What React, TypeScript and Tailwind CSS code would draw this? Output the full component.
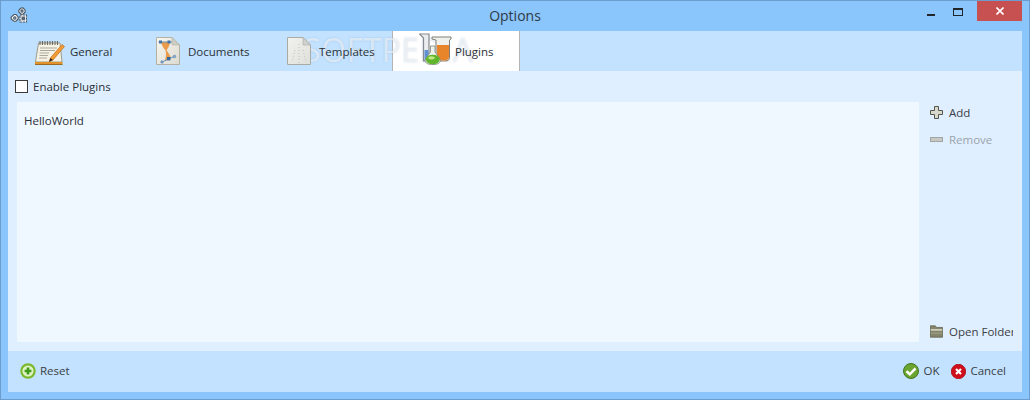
import { ReactNode } from "react";

function Gears() {
  return (
    <svg width="18" height="17" viewBox="0 0 18 17" fill="#f7fbff" stroke="#4c5660" strokeWidth="1.1">
      <path d="M11 1L13 0.8L15 3L15.2 5L13 7.2L11 7L8.8 5L9 3Z" />
      <path d="M4 7.5L6 7.5L8.2 10L8.2 12L6 14.2L4 14.2L1.2 12L1.2 10Z" />
      <path d="M10 8H16.5V15H10Z" strokeDasharray="2.2 0.8" />
      <rect x="11.5" y="9.5" width="3.6" height="3.8" fill="#5a646e" stroke="none" />
      <circle cx="12" cy="4" r="1.1" fill="#8ac5fb" />
      <circle cx="4.8" cy="10.9" r="1.2" fill="#8ac5fb" />
    </svg>
  );
}

function NotepadIcon() {
  return (
    <svg width="30" height="25" viewBox="0 0 30 25">
      <path d="M3.5 3H25L27 22H.5Z" fill="#f6f3e6" stroke="#9d9a88" />
      <path d="M0 22H27.5V24.5H0Z" fill="#e1922a" />
      <path d="M0 24.5H27.5" stroke="#9a6b22" strokeWidth="1" />
      <path d="M5 1V5M7.5 1V5M10 1V5M12.5 1V5M15 1V5M17.5 1V5M20 1V5M22.5 1V5" stroke="#6c6b62" strokeWidth="1.1" />
      <path d="M5 8H22M5 10.5H20M4.5 13H14M4.5 15.5H13M4 18H12" stroke="#aaa89c" strokeWidth="1" />
      <path d="M27 4.5L29.5 6.5L18 20L14.2 21.8L15.4 18Z" fill="#f29a33" stroke="#bd6f1c" strokeWidth="0.7" />
      <path d="M15.4 18L14.2 21.8L18 20Z" fill="#2e2a22" />
    </svg>
  );
}

function DocumentIcon() {
  return (
    <svg width="24" height="28" viewBox="0 0 24 28">
      <defs>
        <linearGradient id="docFill" x1="0" y1="0" x2="1" y2="1">
          <stop offset="0" stopColor="#f9f8f2" />
          <stop offset="1" stopColor="#dcdad0" />
        </linearGradient>
      </defs>
      <path d="M.5 .5H16L23.5 8V27.5H.5Z" fill="url(#docFill)" stroke="#b3b1a6" />
      <path d="M16 .5V8H23.5Z" fill="#cfcdc2" stroke="#b3b1a6" strokeWidth="0.6" />
      <path d="M5 5H14C13.5 9 12 11.5 10.5 13C12 15 14 18 15 21L9 24C10 19 10.5 16 9.5 13.5C7.5 11 5.5 8 5 5Z" fill="#ea9c4d" />
      <path d="M2.5 5H16M6 25L18 19.5" stroke="#5f86b0" strokeWidth="0.9" />
      <rect x="3" y="3.5" width="3" height="3" fill="#4375a8" />
      <rect x="11.5" y="3.5" width="3" height="3" fill="#4375a8" />
      <rect x="11" y="20" width="3.4" height="3.4" fill="#34689d" />
      <circle cx="6" cy="25" r="1.3" fill="#8fb0cf" stroke="#4375a8" strokeWidth="0.5" />
      <circle cx="18.5" cy="19.5" r="1.3" fill="#8fb0cf" stroke="#4375a8" strokeWidth="0.5" />
    </svg>
  );
}

function TemplateIcon() {
  return (
    <svg width="24" height="28" viewBox="0 0 24 28">
      <defs>
        <linearGradient id="tplFill" x1="0" y1="0" x2="1" y2="1">
          <stop offset="0" stopColor="#f2f2ee" />
          <stop offset="1" stopColor="#dededa" />
        </linearGradient>
      </defs>
      <path d="M.5 .5H16L23.5 8V27.5H.5Z" fill="url(#tplFill)" stroke="#aaaaa6" />
      <path d="M16 .5V8H23.5Z" fill="#d0d0cc" stroke="#aaaaa6" strokeWidth="0.6" />
      <path d="M12 7V26M8 13L5 25M16 13L19 25" stroke="#bcbcb8" strokeWidth="0.9" strokeDasharray="1 2" />
    </svg>
  );
}

function FlasksIcon() {
  return (
    <svg width="33" height="32" viewBox="0 0 33 32">
      <path d="M.5 1H10V28H4.5V5Z" fill="#e9edf0" stroke="#85898d" strokeWidth="1.2" />
      <rect x="5.5" y="17" width="4" height="11" fill="#5e8fd0" />
      <path d="M13 4H32V6L30.5 7V24C30.5 27 29 28 26 28H17V7L13 6Z" fill="#f0f0ec" stroke="#807e76" />
      <path d="M18 12H30V24C30 26 28 27.5 26 27.5H18Z" fill="#e8842a" />
      <path d="M11.5 13H16V19L21 26C22.5 29 19.5 31.5 15 31.5H12.5C8 31.5 5 29 6.5 26L11.5 19Z" fill="#eef3ee" stroke="#7b877b" strokeWidth="0.8" />
      <ellipse cx="13.8" cy="26.5" rx="7" ry="4.8" fill="#62b52a" />
      <ellipse cx="12.5" cy="24.8" rx="3.2" ry="1.6" fill="#c3e886" />
    </svg>
  );
}

function TabItem({ label, icon, active, className }: { label: string; icon: ReactNode; active?: boolean; className: string }) {
  return (
    <div className={`flex h-10 shrink-0 items-center ${active ? "border-x border-[#b4b4b4] bg-white" : ""} ${className}`}>
      <div className="relative z-10 mb-[6px] flex shrink-0 self-end">{icon}</div>
      <span className="relative z-10 mt-[1px] text-[11.5px] text-[#2c3136]">{label}</span>
    </div>
  );
}

function PlusIcon() {
  return (
    <svg width="13" height="13" viewBox="0 0 13 13">
      <path d="M4.5 .5H8.5V4.5H12.5V8.5H8.5V12.5H4.5V8.5H.5V4.5H4.5Z" fill="#d8d8cc" stroke="#55554c" />
    </svg>
  );
}

function MinusIcon() {
  return (
    <svg width="13" height="5" viewBox="0 0 13 5">
      <rect x=".5" y=".5" width="12" height="4" fill="#c8c8c4" stroke="#a2a5a6" />
    </svg>
  );
}

function FolderIcon() {
  return (
    <svg width="16" height="15" viewBox="0 0 16 15">
      <path d="M.5 .5H6.5L8 2.5H15.5V14.5H.5Z" fill="#85856c" stroke="#65654f" />
      <path d="M1 4.5H15V6.5H1Z" fill="#d5d5c5" />
      <path d="M1 9H15V10H1Z" fill="#a8a890" />
    </svg>
  );
}

function ResetIcon() {
  return (
    <svg width="16" height="16" viewBox="0 0 16 16">
      <circle cx="8" cy="8" r="7.7" fill="#79b92a" />
      <circle cx="8" cy="8" r="5.6" fill="#dff3c6" />
      <path d="M6.7 4.6H9.3V6.7H11.4V9.3H9.3V11.4H6.7V9.3H4.6V6.7H6.7Z" fill="#3f9a1a" />
    </svg>
  );
}

function OkIcon() {
  return (
    <svg width="16" height="16" viewBox="0 0 16 16">
      <circle cx="8" cy="8" r="7.5" fill="#6aa62f" stroke="#44721d" strokeWidth="1" />
      <path d="M3.5 8.3L6.8 11.3L12.5 5.3" fill="none" stroke="#fff" strokeWidth="2.6" />
    </svg>
  );
}

function CancelIcon() {
  return (
    <svg width="15" height="15" viewBox="0 0 15 15">
      <circle cx="7.5" cy="7.5" r="7.2" fill="#cf0f1a" stroke="#a80d14" strokeWidth="0.8" />
      <path d="M5 5L10 10M10 5L5 10" stroke="#fff" strokeWidth="2.2" />
    </svg>
  );
}

function SideButton({ icon, label, dim }: { icon: ReactNode; label: string; dim?: boolean }) {
  return (
    <div className="flex h-[27px] items-center">
      <div className="flex w-[13px] shrink-0 justify-start overflow-visible">{icon}</div>
      <span className={`ml-[6px] whitespace-nowrap text-[11.5px] ${dim ? "text-[#9ba3aa]" : "text-[#3b4045]"}`}>{label}</span>
    </div>
  );
}

export default function App() {
  return (
    <div className="flex h-[400px] w-[1030px] flex-col overflow-hidden border border-[#6d9dcf] bg-[#8ac5fb] font-['Open_Sans',sans-serif]">
      <div className="relative flex h-[30px] shrink-0 items-center justify-center pb-[2px]">
        <div className="absolute left-[9px] top-[6px]">
          <Gears />
        </div>
        <span className="text-[14px] text-[#2f3a46]">Options</span>
        <div className="absolute right-[7px] top-0 flex items-start">
          <div className="mt-[13px] h-[2px] w-[8px] bg-[#20262c]" />
          <div className="ml-[18px] mt-[7px] h-[8px] w-[10px] border border-t-2 border-[#20262c]" />
          <div className="ml-[14px] flex h-[20px] w-[45px] items-center justify-center bg-[#c75050]">
            <svg width="8" height="8" viewBox="0 0 8 8">
              <path d="M.5 .5L7.5 7.5M7.5 .5L.5 7.5" stroke="#fff" strokeWidth="1.6" />
            </svg>
          </div>
        </div>
      </div>

      <div className="mx-[7px] flex flex-1 flex-col">
        <div className="relative flex h-10 shrink-0 bg-[#c2e2ff]">
          <TabItem label="General" icon={<NotepadIcon />} className="w-[147px] gap-[5px] pl-[27px]" />
          <TabItem label="Documents" icon={<DocumentIcon />} className="w-[131px] gap-[8px] pl-[1px]" />
          <TabItem label="Templates" icon={<TemplateIcon />} className="w-[106px] gap-[8px] pl-[1px]" />
          <TabItem label="Plugins" icon={<FlasksIcon />} active className="w-[128px] gap-[3px] pl-[26px]" />
          <span className="absolute left-[295px] -top-[5px] whitespace-nowrap text-[32px] tracking-[0.5px] text-white/55 [text-shadow:0_0_2px_rgba(120,150,185,0.4)]">
            SOFTPEDIA
          </span>
        </div>

        <div className="flex flex-1 flex-col bg-[#dfefff] px-[9px]">
          <label className="flex h-[31px] shrink-0 items-center">
            <span className="-ml-[2px] h-[13px] w-[13px] border border-[#3a3a3a] bg-white" />
            <span className="ml-[5px] text-[11.5px] text-[#2c3136]">Enable Plugins</span>
          </label>
          <div className="flex h-[240px]">
            <div className="flex-1 bg-[#eff7ff] px-[7px] py-[10px] text-[11.5px] text-[#2c3136]">HelloWorld</div>
            <div className="flex w-[94px] shrink-0 flex-col overflow-hidden pl-[11px]">
              <div className="-mt-[3px]">
                <SideButton icon={<PlusIcon />} label="Add" />
                <SideButton icon={<MinusIcon />} label="Remove" dim />
              </div>
              <div className="mt-auto -mb-[3px]">
                <SideButton icon={<FolderIcon />} label="Open Folder" />
              </div>
            </div>
          </div>
        </div>

        <div className="flex h-[41px] shrink-0 items-center justify-between bg-[#c2e2ff] pb-[1px] pl-[12px] pr-[16px]">
          <div className="flex items-center gap-[4px]">
            <ResetIcon />
            <span className="text-[11.5px] text-[#3b4045]">Reset</span>
          </div>
          <div className="flex items-center">
            <OkIcon />
            <span className="ml-[4px] text-[11.5px] text-[#3b4045]">OK</span>
            <div className="ml-[12px]">
              <CancelIcon />
            </div>
            <span className="ml-[4px] text-[11.5px] text-[#3b4045]">Cancel</span>
          </div>
        </div>
      </div>
      <div className="h-[7px] shrink-0" />
    </div>
  );
}
